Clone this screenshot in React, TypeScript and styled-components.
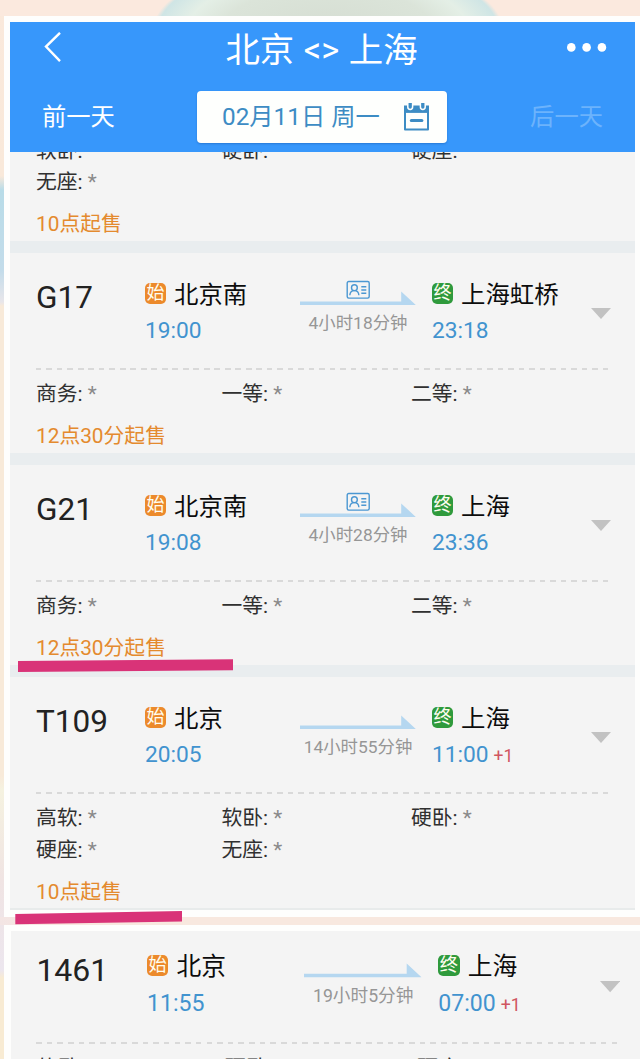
import React from 'react';
import styled, { createGlobalStyle } from 'styled-components';

const GlobalStyle = createGlobalStyle`
  * {
    box-sizing: border-box;
  }

  body {
    margin: 0;
    font-family: Roboto, 'Noto Sans CJK SC', sans-serif;
  }
`;

const Page = styled.div`
  position: relative;
  width: 640px;
  height: 1059px;
  padding: 16px 0 0 4px;
  overflow: hidden;
  background:
    radial-gradient(ellipse 175px 70px at 328px 30px, #d5ddd2 0%, #dbe4d9 60%, #e4efe6 80%, #cfe5e5 97%, transparent 100%) 0 0 / 640px 16px no-repeat,
    linear-gradient(#fbe9de 0 16px, transparent 16px) 0 0 / 640px 16px no-repeat,
    linear-gradient(90deg, #f3e5e4, #f8e8df 8%) 0 917px / 640px 8px no-repeat,
    linear-gradient(#fae9dc 0, #f9e9da 176px, #b9dce8 190px, #c3dcea 270px, #e8e6ea 302px, #f8ead9 306px, #f8ead9 776px, #f5f2e0 790px, #f0e4e3 880px, #ece6ee 970px, #f8ebd3 978px);
`;

const Shot = styled.div`
  width: 636px;
  height: 901px;
  padding: 6px 5px 0 6px;
  background: #fefefd;
`;

const NextShot = styled.div`
  height: 134px;
  margin-top: 8px;
  padding: 6px 0 0 7px;
  background: #fefefd;
`;

const Header = styled.header`
  height: 130px;
  background: #3797fb;
  color: #fff;
`;

const TitleBar = styled.div`
  display: grid;
  grid-template-columns: 42px 1fr 42px;
  align-items: center;
  height: 56px;
  padding: 0 28px 0 33px;
`;

const Title = styled.h1`
  margin: 0;
  padding-right: 7px;
  font-size: 34.4px;
  line-height: 56px;
  font-weight: 400;
  text-align: center;
  white-space: pre;
  word-spacing: 1px;
`;

const DateBar = styled.div`
  display: grid;
  grid-template-columns: 155px 250px 1fr;
  align-items: center;
  height: 52px;
  margin: 13px 32px 0;
  font-size: 24.3px;
  line-height: 52px;
`;

const DayLink = styled.span<{ $disabled?: boolean }>`
  color: ${({ $disabled }) => ($disabled ? '#6cb3fc' : '#fff')};
  justify-self: ${({ $disabled }) => ($disabled ? 'end' : 'start')};
`;

const DateBox = styled.div`
  display: flex;
  align-items: center;
  justify-content: space-between;
  height: 52px;
  padding: 0 17px 0 25px;
  border-radius: 4px;
  background: #fefffd;
  color: #3d8cc4;
  box-shadow: 0 1px 2px rgba(20, 80, 160, 0.4);
`;

const List = styled.div`
  height: 758px;
  border-bottom: 2px solid #e8ebeb;
  background: #f4f4f4;
  overflow: hidden;
`;

// Only the tail of the previous train is scrolled into view
const ScrolledRow = styled.div`
  display: flex;
  flex-direction: column;
  justify-content: flex-end;
  height: 89px;
  overflow: hidden;
`;

const NextList = styled.div`
  height: 128px;
  overflow: hidden;
  background: #f4f4f4;
`;

const Enlarged = styled.div`
  zoom: 1.015;
  width: 625px;
  margin: -6px 0 0 -1px;
`;

const Separator = styled.div`
  height: 12px;
  background: #e9edef;
`;

const Row = styled.section`
  flex: none;
  padding: 0 26px 1px;
`;

const Summary = styled.div`
  display: grid;
  grid-template-columns: 109px 155px 116px 1fr 20px;
  height: 115px;
  margin-right: -2px;
`;

const TrainNumber = styled.div`
  padding-top: 24px;
  font-size: 31.5px;
  line-height: 42px;
  color: #222;
`;

const Stop = styled.div<{ $inset?: boolean }>`
  padding: 24px 0 0 ${({ $inset }) => ($inset ? '16px' : '0')};
  white-space: nowrap;
`;

const Station = styled.div`
  display: flex;
  align-items: center;
  gap: 8px;
  height: 36px;
  font-size: 24.4px;
  line-height: 36px;
  color: #0c0c0c;
`;

const Badge = styled.span<{ $end?: boolean }>`
  width: 21px;
  height: 21px;
  margin-top: -4px;
  border-radius: 5px;
  background: ${({ $end }) => ($end ? '#2f9a3c' : '#ec8a2b')};
  color: #fffdf0;
  font-size: 18px;
  line-height: 20px;
  text-align: center;
`;

const Time = styled.div`
  font-size: 22.7px;
  line-height: 36px;
  color: #4193cf;
`;

const NextDay = styled.span`
  margin-left: 5px;
  font-size: 17.5px;
  color: #d05560;
`;

const Route = styled.div`
  padding-top: 27px;
`;

const Duration = styled.div`
  font-size: 17.4px;
  line-height: 33px;
  text-align: center;
  white-space: nowrap;
  color: #969696;
`;

const Toggle = styled.svg`
  display: block;
  margin-top: 55px;
`;

const Dashes = styled.div`
  height: 2px;
  margin-right: -1px;
  background: repeating-linear-gradient(90deg, #d9d9d9 0 5.5px, transparent 5.5px 10.5px);
`;

const Seats = styled.div`
  display: grid;
  grid-template-columns: 185.5px 189.5px 1fr;
  padding-top: 9px;
  font-size: 20.8px;
  line-height: 31.5px;
  color: #303030;
`;

const Star = styled.span`
  margin-left: 5px;
  color: #8a8a8a;
`;

const SaleNote = styled.div`
  margin-top: 9.5px;
  font-size: 20.8px;
  line-height: 32px;
  color: #e48a2e;
`;

const Marks = styled.svg`
  position: absolute;
  top: 0;
  left: 0;
`;

interface Train {
  number: string;
  from: string;
  depart: string;
  to: string;
  arrive: string;
  nextDay?: boolean;
  duration: string;
  idCard?: boolean;
  seats: string[];
  sale: string;
}

const trains: Train[] = [
  {
    number: 'G17',
    from: '北京南',
    depart: '19:00',
    to: '上海虹桥',
    arrive: '23:18',
    duration: '4小时18分钟',
    idCard: true,
    seats: ['商务', '一等', '二等'],
    sale: '12点30分起售',
  },
  {
    number: 'G21',
    from: '北京南',
    depart: '19:08',
    to: '上海',
    arrive: '23:36',
    duration: '4小时28分钟',
    idCard: true,
    seats: ['商务', '一等', '二等'],
    sale: '12点30分起售',
  },
  {
    number: 'T109',
    from: '北京',
    depart: '20:05',
    to: '上海',
    arrive: '11:00',
    nextDay: true,
    duration: '14小时55分钟',
    seats: ['高软', '软卧', '硬卧', '硬座', '无座'],
    sale: '10点起售',
  },
];

const nextTrain: Train = {
  number: '1461',
  from: '北京',
  depart: '11:55',
  to: '上海',
  arrive: '07:00',
  nextDay: true,
  duration: '19小时5分钟',
  seats: ['软卧', '硬卧', '硬座'],
  sale: '10点起售',
};

const BackIcon = () => (
  <svg width="20" height="36" viewBox="0 0 20 36" fill="none" stroke="#fff" strokeWidth="2.4">
    <path d="M17 .8 3 14.6 17 29.2" />
  </svg>
);

const MoreIcon = () => (
  <svg width="42" height="15" viewBox="0 0 42 15" fill="#fff">
    <circle cx="6.3" cy="4.4" r="4.3" />
    <circle cx="21.6" cy="4.4" r="4.3" />
    <circle cx="36.9" cy="4.4" r="4.3" />
  </svg>
);

const CalendarIcon = () => (
  <svg width="27" height="28" viewBox="0 -1.5 27 28" fill="none">
    <path d="M1 1h25v24a1 1 0 0 1-1 1H2a1 1 0 0 1-1-1z" fill="#3d8cc4" />
    <path d="M3 8.4h21V24H3z" fill="#fefffd" />
    <path d="M4.8-1.5v4a2.4 2.4 0 0 0 4.8 0v-4M17.4-1.5v4a2.4 2.4 0 0 0 4.8 0v-4" fill="#3d8cc4" stroke="#fefffd" strokeWidth="1.5" />
    <path d="M8.3 16h10.6" stroke="#3d8cc4" strokeWidth="3" strokeLinecap="round" />
  </svg>
);

const RouteArrow = ({ idCard }: { idCard?: boolean }) => (
  <svg width="116" height="27" viewBox="0 0 116 27" fill="none" style={{ display: 'block' }}>
    <path d="M0 21.4h101.2v-10L115.8 25H0z" fill="#b5d7f0" />
    {idCard && (
      <g stroke="#4b97d2" strokeWidth="1.4">
        <rect x="47.2" y="1.5" width="22" height="16.6" rx="1.5" />
        <circle cx="54.4" cy="7.7" r="2.9" />
        <path d="M49.8 15.2c.2-2.8 1.9-4.6 4.6-4.6s4.3 1.8 4.5 4.6M61.3 6.7h5M61.3 10h5M61.3 13.3h5" />
      </g>
    )}
  </svg>
);

const SeatList = ({ seats }: { seats: string[] }) => (
  <Seats>
    {seats.map((seat) => (
      <span key={seat}>
        {seat}:<Star>*</Star>
      </span>
    ))}
  </Seats>
);

const TrainRow = ({ train }: { train: Train }) => (
  <Row>
    <Summary>
      <TrainNumber>{train.number}</TrainNumber>
      <Stop>
        <Station>
          <Badge>始</Badge>
          {train.from}
        </Station>
        <Time>{train.depart}</Time>
      </Stop>
      <Route>
        <RouteArrow idCard={train.idCard} />
        <Duration>{train.duration}</Duration>
      </Route>
      <Stop $inset>
        <Station>
          <Badge $end>终</Badge>
          {train.to}
        </Station>
        <Time>
          {train.arrive}
          {train.nextDay && <NextDay>+1</NextDay>}
        </Time>
      </Stop>
      <Toggle width="20" height="12" viewBox="0 0 20 12">
        <path d="M0 0h20L10 11z" fill="#c2c2c2" />
      </Toggle>
    </Summary>
    <Dashes />
    <SeatList seats={train.seats} />
    <SaleNote>{train.sale}</SaleNote>
  </Row>
);

const App = () => (
  <>
    <GlobalStyle />
    <Page>
      <Shot>
        <Header>
          <TitleBar>
            <BackIcon />
            <Title>{'北京 <> 上海'}</Title>
            <MoreIcon />
          </TitleBar>
          <DateBar>
            <DayLink>前一天</DayLink>
            <DateBox>
              02月11日 周一
              <CalendarIcon />
            </DateBox>
            <DayLink $disabled>后一天</DayLink>
          </DateBar>
        </Header>
        <List>
          <ScrolledRow>
            <Row>
              <SeatList seats={['软卧', '硬卧', '硬座', '无座']} />
              <SaleNote>10点起售</SaleNote>
            </Row>
          </ScrolledRow>
          {trains.map((train) => (
            <React.Fragment key={train.number}>
              <Separator />
              <TrainRow train={train} />
            </React.Fragment>
          ))}
        </List>
      </Shot>
      <NextShot>
        <NextList>
          <Enlarged>
            <TrainRow train={nextTrain} />
          </Enlarged>
        </NextList>
      </NextShot>
      <Marks width="640" height="1059" viewBox="0 0 640 1059" fill="#d93378">
        <path d="M18 661 233 659.3V670.3L18 672z" />
        <path d="M15.3 914 182 911V921.5L15.3 924.3z" />
      </Marks>
    </Page>
  </>
);

export default App;
